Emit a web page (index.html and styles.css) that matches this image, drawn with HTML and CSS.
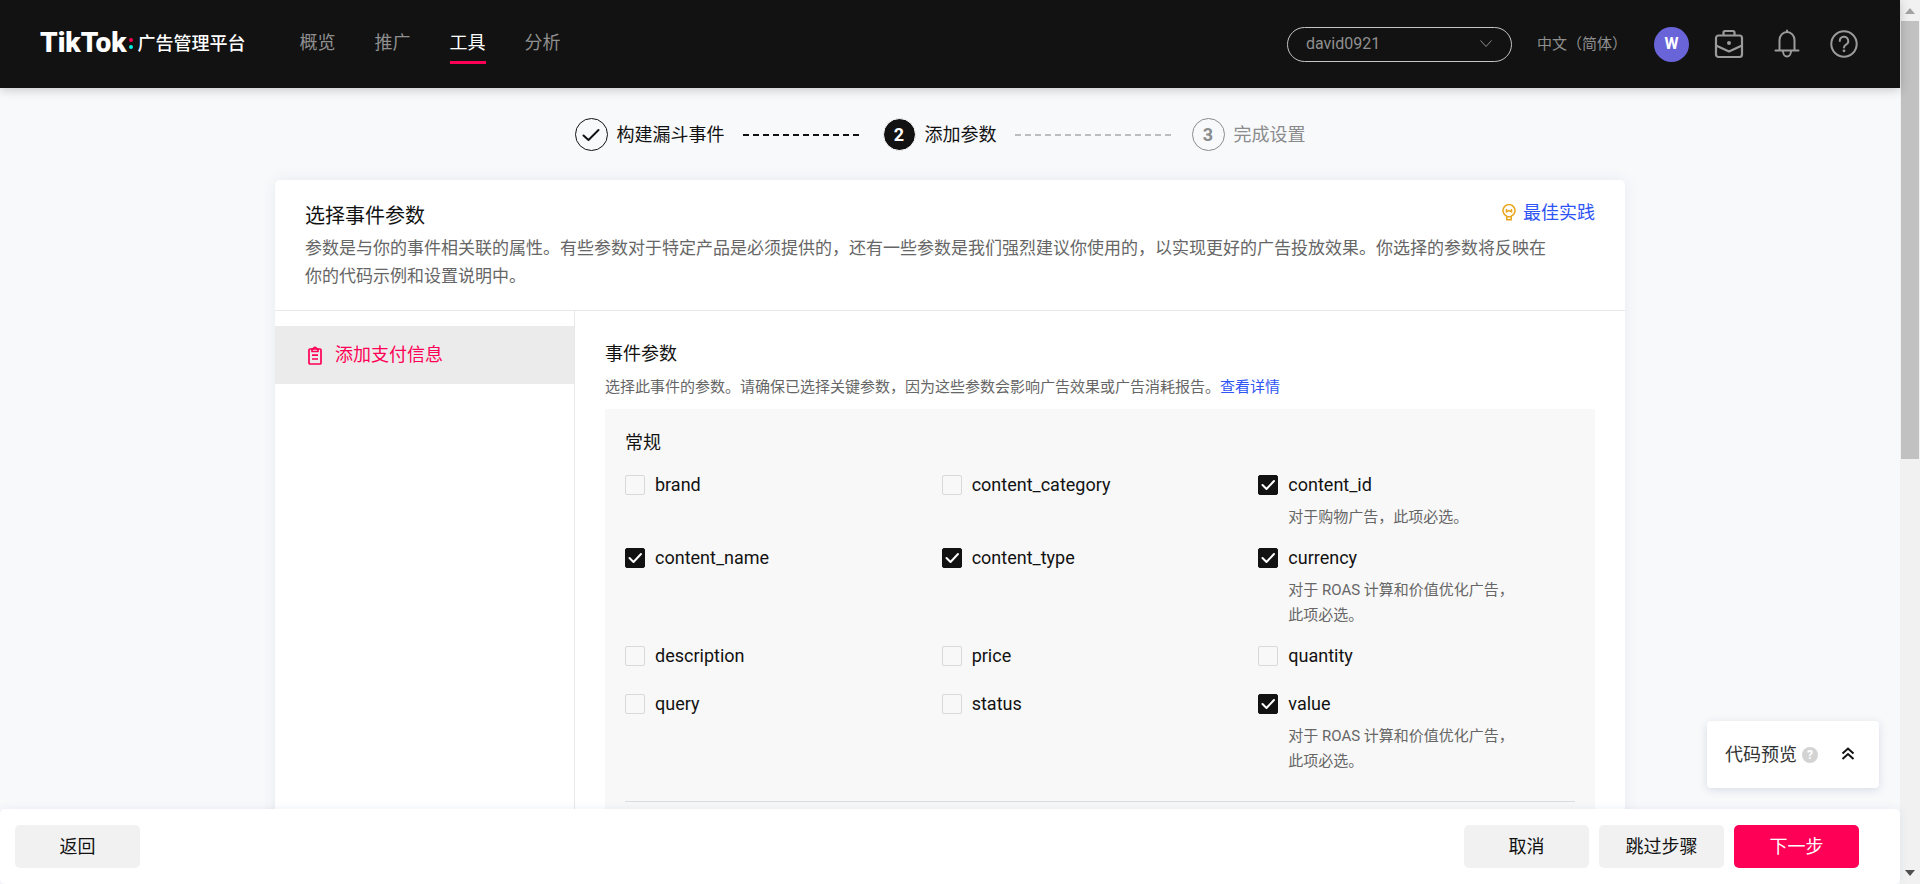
FILE: index.html
```html
<!DOCTYPE html>
<html lang="zh-CN">
<head>
<meta charset="utf-8">
<meta name="viewport" content="width=device-width, initial-scale=1">
<title>TikTok 广告管理平台</title>
<link rel="stylesheet" href="styles.css">
</head>
<body>
<div class="window">
  <div class="app">
    <header class="topbar">
      <a class="brand" href="#">
        <span class="brand-word">TikTok</span>
        <span class="brand-dots"><i class="dot dot-red"></i><i class="dot dot-cyan"></i></span>
        <span class="brand-name">广告管理平台</span>
      </a>
      <nav class="nav">
        <a class="nav-link" href="#">概览</a>
        <a class="nav-link" href="#">推广</a>
        <a class="nav-link nav-link-active" href="#" aria-current="page">工具</a>
        <a class="nav-link" href="#">分析</a>
      </nav>
      <div class="tools">
        <button class="account" type="button"><span>david0921</span>
          <svg width="14" height="10" viewBox="0 0 14 10" fill="none" stroke="currentColor"><path d="M1.500 1.500 7 7.500l5.500-6"/></svg>
        </button>
        <button class="lang" type="button">中文（简体）</button>
        <button class="avatar" type="button">W</button>
        <div class="icons">
        <button type="button" aria-label="商务中心">
          <svg width="30" height="30" viewBox="0 0 30 30" fill="none" stroke="currentColor" stroke-width="2.200" stroke-linejoin="round"><rect x="2" y="6.500" width="26" height="21.500" rx="2.500"/><path d="M9.500 6.500V3.500a1.500 1.500 0 0 1 1.500-1.500h8a1.500 1.500 0 0 1 1.500 1.500v3M2 16.500l13 6 13-6"/><circle cx="15" cy="14" r="2" fill="currentColor" stroke="none"/></svg>
        </button>
        <button type="button" aria-label="通知">
          <svg width="26" height="30" viewBox="0 0 26 30" fill="none" stroke="currentColor" stroke-width="2" stroke-linecap="round" stroke-linejoin="round"><path d="M13 1.500v1.500M5.500 21.500V11a7.500 8 0 0 1 15 0v10.500M1.500 21.500h23M9 22a4 5.500 0 0 0 8 0"/></svg>
        </button>
        <button type="button" aria-label="帮助">
          <svg width="28" height="28" viewBox="0 0 28 28" fill="none" stroke="currentColor" stroke-width="2" stroke-linecap="round"><circle cx="14" cy="14" r="12.700"/><path d="M9.800 11a4.200 4.200 0 1 1 6.200 3.600c-1.400.8-2 1.500-2 2.900"/><circle cx="14" cy="20.800" r="1.400" fill="currentColor" stroke="none"/></svg>
        </button>
        </div>
      </div>
    </header>

    <main class="main">
      <ol class="steps">
        <li class="step">
          <span class="step-mark"><svg width="18" height="14" viewBox="0 0 18 14" fill="none" stroke="currentColor" stroke-width="2" stroke-linecap="round" stroke-linejoin="round"><path d="M1.500 7.500l5 4.500L16.500 2"/></svg></span>
          <span class="step-label">构建漏斗事件</span>
          <span class="step-line"></span>
        </li>
        <li class="step" aria-current="step">
          <span class="step-mark step-mark-current">2</span>
          <span class="step-label">添加参数</span>
          <span class="step-line step-line-todo"></span>
        </li>
        <li class="step step-todo">
          <span class="step-mark">3</span>
          <span class="step-label">完成设置</span>
        </li>
      </ol>

      <section class="card">
        <div class="card-head">
          <div class="card-title-row">
            <h1 class="card-title">选择事件参数</h1>
            <a class="tip-link" href="#">
              <svg width="14" height="17" viewBox="0 0 14 17" fill="none" stroke="#e9a51b" stroke-width="1.500"><path d="M4.800 12.200a6 6 0 1 1 4.400 0v3.500H4.800zM4.800 12.700h4.400"/><path d="M4.500 5v2.800L7 6.500l2.500 1.300V5"/></svg>
              最佳实践
            </a>
          </div>
          <p class="card-text">参数是与你的事件相关联的属性。有些参数对于特定产品是必须提供的，还有一些参数是我们强烈建议你使用的，以实现更好的广告投放效果。你选择的参数将反映在<br>你的代码示例和设置说明中。</p>
        </div>
        <div class="card-body">
          <nav class="side">
            <a class="side-item" href="#">
              <svg width="14" height="19" viewBox="0 0 14 19" fill="none" stroke="currentColor" stroke-width="1.700" stroke-linejoin="round"><rect x="1" y="3" width="12" height="15" rx="1"/><path d="M4 3.500V5.500h6V3.500L8.500 2.500a1.600 1.600 0 0 0-3 0zM4 9.200h6M4 13h6"/></svg>
              添加支付信息
            </a>
          </nav>
          <div class="params">
            <h2 class="params-title">事件参数</h2>
            <p class="params-text">选择此事件的参数。请确保已选择关键参数，因为这些参数会影响广告效果或广告消耗报告。<a class="link" href="#">查看详情</a></p>
            <fieldset class="group">
              <legend class="group-title">常规</legend>
              <div class="grid">
                <div class="param"><label class="check"><input type="checkbox">brand</label></div>
                <div class="param"><label class="check"><input type="checkbox">content_category</label></div>
                <div class="param"><label class="check"><input type="checkbox" checked>content_id</label><p class="hint">对于购物广告，此项必选。</p></div>
                <div class="param"><label class="check"><input type="checkbox" checked>content_name</label></div>
                <div class="param"><label class="check"><input type="checkbox" checked>content_type</label></div>
                <div class="param"><label class="check"><input type="checkbox" checked>currency</label><p class="hint">对于 ROAS 计算和价值优化广告，此项必选。</p></div>
                <div class="param"><label class="check"><input type="checkbox">description</label></div>
                <div class="param"><label class="check"><input type="checkbox">price</label></div>
                <div class="param"><label class="check"><input type="checkbox">quantity</label></div>
                <div class="param"><label class="check"><input type="checkbox">query</label></div>
                <div class="param"><label class="check"><input type="checkbox">status</label></div>
                <div class="param"><label class="check"><input type="checkbox" checked>value</label><p class="hint">对于 ROAS 计算和价值优化广告，此项必选。</p></div>
              </div>
            </fieldset>
          </div>
        </div>
      </section>
      <div class="preview">
        <span class="preview-label">代码预览</span>
        <span class="preview-help">?</span>
        <button class="preview-toggle" type="button" aria-label="展开">
          <svg width="14" height="16" viewBox="0 0 14 16" fill="none" stroke="currentColor" stroke-width="2"><path d="M1.500 6.500 7 1.500l5.500 5M1.500 12 7 7l5.500 5"/></svg>
        </button>
      </div>
    </main>

    <footer class="actions">
      <button class="button" type="button">返回</button>
      <div class="actions-right">
        <button class="button" type="button">取消</button>
        <button class="button" type="button">跳过步骤</button>
        <button class="button button-primary" type="button">下一步</button>
      </div>
    </footer>
  </div>
  <div class="scrollbar" aria-hidden="true">
    <svg class="arrow arrow-up" width="10" height="6" viewBox="0 0 10 6"><path d="M0 6 5 0l5 6z" fill="currentColor"/></svg>
    <div class="thumb"></div>
    <svg class="arrow" width="10" height="6" viewBox="0 0 10 6"><path d="M0 0h10L5 6z" fill="currentColor"/></svg>
  </div>
</div>
</body>
</html>
```
FILE: styles.css
```css
* { box-sizing: border-box; }

body {
  margin: 0;
  background: #f8f9fb;
  color: #121212;
  font: 18px/28px Roboto, "Noto Sans CJK SC", sans-serif;
}

h1, h2, p, ol, fieldset { margin: 0; padding: 0; border: 0; font-weight: 400; }
button { font: inherit; color: inherit; border: 0; padding: 0; background: none; cursor: pointer; }
a { color: inherit; text-decoration: none; }
svg { display: block; flex: none; }

.window { display: flex; height: 100vh; }
.app { flex: 1; min-width: 0; display: flex; flex-direction: column; }

/* Top bar */
.topbar {
  flex: none;
  display: flex;
  align-items: center;
  height: 88px;
  padding: 0 42px 0 40px;
  background: #121212;
  color: #8f8f8f;
  box-shadow: 0 2px 10px rgba(0, 0, 0, .2);
  z-index: 2;
}
.brand { display: flex; align-items: center; padding-bottom: 3px; color: #fff; }
.brand-word { font-size: 28px; font-weight: 900; line-height: 32px; }
.brand-dots { display: flex; flex-direction: column; gap: 3px; margin: 2px 5px 0 2px; }
.dot { width: 4px; height: 4px; border-radius: 50%; }
.dot-red { background: #ff004f; }
.dot-cyan { background: #00f2ea; }
.brand-name { padding-top: 2px; font-weight: 500; }
.nav { display: flex; gap: 39px; margin-left: 54px; }
.nav-link { padding: 4px 0; border-bottom: 3px solid transparent; }
.nav-link-active { color: #fff; border-color: #fe0055; }
.tools { display: flex; align-items: center; margin-left: auto; }
.account {
  display: flex;
  align-items: center;
  justify-content: space-between;
  width: 225px;
  height: 35px;
  padding: 0 18px;
  border: 1px solid #c4c4c4;
  border-radius: 18px;
  font-size: 16px;
}
.lang { margin: 0 27px 0 25px; font-size: 15px; }
.avatar {
  width: 35px;
  height: 35px;
  border-radius: 50%;
  background: #6a64d9;
  color: #fff;
  font-size: 16px;
  font-weight: 700;
}
.icons { display: flex; align-items: center; gap: 30px; margin-left: 25px; color: #9b9b9b; }

/* Steps */
.main { position: relative; flex: 1; min-height: 0; overflow: hidden; padding: 30px 24px 0; }
.steps { display: flex; justify-content: center; gap: 20px; padding-right: 20px; list-style: none; }
.step { display: flex; align-items: center; }
.step-mark {
  display: grid;
  place-items: center;
  width: 33px;
  height: 33px;
  border: 1px solid currentColor;
  border-radius: 50%;
  font-weight: 700;
}
.step-mark-current { background: #121212; color: #fff; }
.step-label { margin-left: 9px; }
.step-line {
  width: 120px;
  height: 2px;
  margin-left: 18px;
  background: repeating-linear-gradient(90deg, #121212 0 6px, transparent 6px 10px);
}
.step-line-todo {
  width: 157px;
  background: repeating-linear-gradient(90deg, #bcbdbe 0 6px, transparent 6px 10px);
}
.step-todo { color: #8a8b8c; }

/* Card */
.card {
  max-width: 1350px;
  margin: 29px auto 0;
  border-radius: 5px;
  background: #fff;
  box-shadow: 0 0 15px rgba(30, 60, 110, .08);
}
.card-head { padding: 20px 30px; border-bottom: 1px solid #e8e8e8; }
.card-title-row { display: flex; justify-content: space-between; align-items: flex-start; }
.card-title { font-size: 20px; line-height: 32px; }
.tip-link { display: flex; align-items: center; gap: 7px; line-height: 25px; color: #2f55f4; }
.card-text { margin-top: 2px; font-size: 17px; color: #666; }
.card-body { display: flex; }
.side { flex: none; width: 300px; min-height: 620px; padding-top: 15px; border-right: 1px solid #e8e8e8; }
.side-item { display: flex; align-items: center; gap: 13px; height: 58px; padding-left: 33px; background: #ebebeb; color: #fe0055; }
.params { flex: 1; min-width: 0; padding: 29px 30px 30px; }
.params-title { font-size: 18px; }
.params-text { margin-top: 7px; font-size: 15px; line-height: 24px; color: #666; }
.link { color: #2f55f4; }
.group { margin-top: 10px; padding: 20px 20px 40px; background: #f8f8f8; }
.group-title { float: left; width: 100%; padding: 0; }
.grid {
  clear: both;
  display: grid;
  grid-template-columns: repeat(3, 1fr);
  row-gap: 18px;
  padding: 18px 0 27px;
  border-bottom: 1px solid #d8dde2;
}
.param { min-height: 30px; }
.check { display: flex; align-items: center; gap: 10px; height: 20px; }
.check input {
  appearance: none;
  width: 20px;
  height: 20px;
  margin: 0;
  border: 1px solid #d9d9d9;
  border-radius: 2px;
}
.check input:checked {
  border-color: #121212;
  background: #121212 url("data:image/svg+xml,%3Csvg xmlns='http://www.w3.org/2000/svg' viewBox='0 0 20 20' fill='none' stroke='white' stroke-width='2' stroke-linecap='round' stroke-linejoin='round'%3E%3Cpath d='M4.500 10l4 4L16 6'/%3E%3C/svg%3E") center / 20px 20px no-repeat;
}
.hint { max-width: 260px; margin-top: 10px; padding-left: 30px; font-size: 15px; line-height: 25px; color: #666; }

/* Floating code preview */
.preview {
  position: absolute;
  right: 21px;
  bottom: 21px;
  display: flex;
  align-items: center;
  height: 67px;
  padding: 0 24px 0 18px;
  border-radius: 4px;
  background: #fff;
  color: #333;
  box-shadow: 0 2px 10px rgba(30, 60, 110, .15);
}
.preview-help {
  width: 16px;
  height: 16px;
  margin: 0 23px 0 5px;
  border-radius: 50%;
  background: #d3d3d3;
  color: #fff;
  font-size: 12px;
  font-weight: 700;
  line-height: 16px;
  text-align: center;
}
.preview-toggle { color: #121212; }

/* Footer */
.actions {
  flex: none;
  display: flex;
  justify-content: space-between;
  align-items: center;
  height: 75px;
  padding: 0 41px 0 15px;
  border-radius: 5px;
  background: #fff;
  box-shadow: 0 0 10px rgba(30, 60, 110, .08);
  z-index: 2;
}
.actions-right { display: flex; gap: 10px; }
.button { width: 125px; height: 43px; border-radius: 5px; background: #f1f1f1; }
.button-primary { background: #fe0055; color: #fff; }

/* Scrollbar */
.scrollbar {
  flex: none;
  display: flex;
  flex-direction: column;
  align-items: center;
  width: 20px;
  padding: 8px 0;
  background: #f1f1f1;
  color: #505050;
}
.arrow-up { color: #a3a3a3; }
.thumb { width: 18px; height: 438px; margin: 7px 0 auto; background: #c1c1c1; }
```
